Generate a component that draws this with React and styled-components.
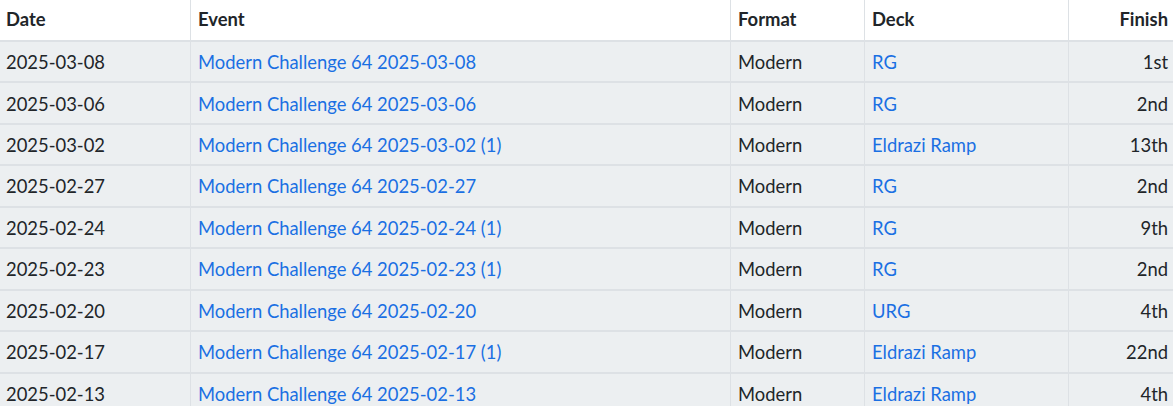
import React from "react";
import styled, { createGlobalStyle } from "styled-components";

const Global = createGlobalStyle`
  html, body { margin: 0; padding: 0; background: #ffffff; }
  body { font-family: Lato, "Open Sans", sans-serif; color: #212529; }
`;

const Table = styled.table`
  width: 1173px;
  border-collapse: separate;
  border-spacing: 0;
  table-layout: fixed;
  font-size: 18.4px;
`;

const Th = styled.th`
  height: 42px;
  box-sizing: border-box;
  padding: 0 ${(p) => (p.$right ? "5px" : "7px")} 2px ${(p) => (p.$first ? "6px" : "7px")};
  text-align: ${(p) => (p.$right ? "right" : "left")};
  font-weight: 700;
  background: #ffffff;
  border-bottom: 2px solid #dde1e5;
  border-right: ${(p) => (p.$last ? "none" : "1px solid #dde1e5")};
  white-space: nowrap;
  vertical-align: middle;
`;

const Row = styled.tr`
  background: #eceff1;
`;

const Td = styled.td`
  height: 38.45px;
  box-sizing: content-box;
  padding: 1px ${(p) => (p.$right ? "5px" : "7px")} 0 ${(p) => (p.$first ? "6px" : "7px")};
  text-align: ${(p) => (p.$right ? "right" : "left")};
  border-bottom: 2px solid #dde1e5;
  border-right: ${(p) => (p.$last ? "none" : "1px solid #dde1e5")};
  white-space: nowrap;
  vertical-align: middle;
  line-height: 1.2;
`;

const Link = styled.a`
  color: #1a6fe3;
  text-decoration: none;
`;

const rows = [
  ["2025-03-08", "Modern Challenge 64 2025-03-08", "RG", "1st"],
  ["2025-03-06", "Modern Challenge 64 2025-03-06", "RG", "2nd"],
  ["2025-03-02", "Modern Challenge 64 2025-03-02 (1)", "Eldrazi Ramp", "13th"],
  ["2025-02-27", "Modern Challenge 64 2025-02-27", "RG", "2nd"],
  ["2025-02-24", "Modern Challenge 64 2025-02-24 (1)", "RG", "9th"],
  ["2025-02-23", "Modern Challenge 64 2025-02-23 (1)", "RG", "2nd"],
  ["2025-02-20", "Modern Challenge 64 2025-02-20", "URG", "4th"],
  ["2025-02-17", "Modern Challenge 64 2025-02-17 (1)", "Eldrazi Ramp", "22nd"],
  ["2025-02-13", "Modern Challenge 64 2025-02-13", "Eldrazi Ramp", "4th"],
];

export default function App() {
  return (
    <>
      <Global />
      <Table>
        <colgroup>
          <col style={{ width: 191 }} />
          <col style={{ width: 540 }} />
          <col style={{ width: 134 }} />
          <col style={{ width: 204 }} />
          <col style={{ width: 104 }} />
        </colgroup>
        <thead>
          <tr>
            <Th $first>Date</Th>
            <Th>Event</Th>
            <Th>Format</Th>
            <Th>Deck</Th>
            <Th $right $last>Finish</Th>
          </tr>
        </thead>
        <tbody>
          {rows.map((r) => (
            <Row key={r[1]}>
              <Td $first>{r[0]}</Td>
              <Td><Link href="#">{r[1]}</Link></Td>
              <Td>Modern</Td>
              <Td><Link href="#">{r[2]}</Link></Td>
              <Td $right $last>{r[3]}</Td>
            </Row>
          ))}
        </tbody>
      </Table>
    </>
  );
}
